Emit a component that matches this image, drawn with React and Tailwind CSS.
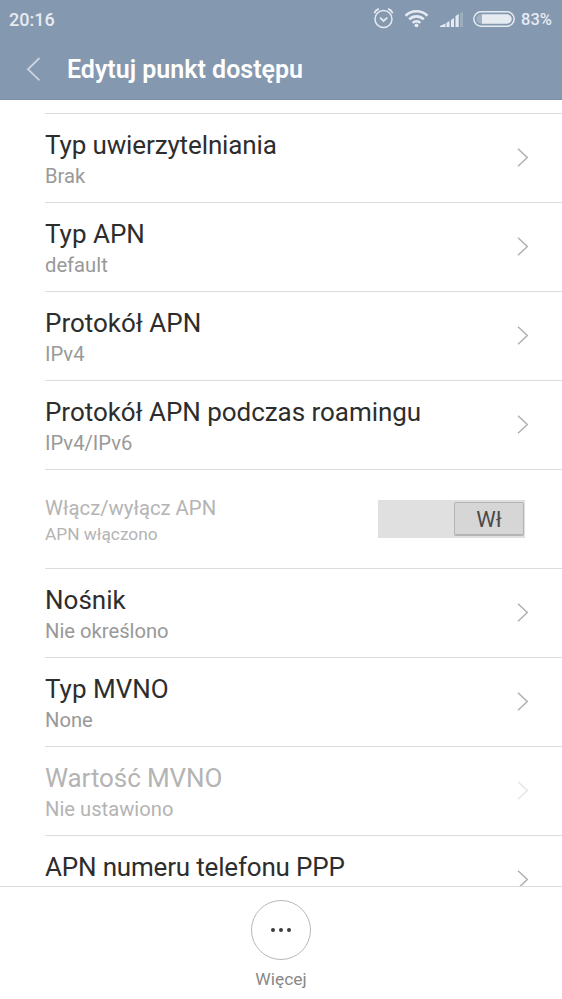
const items = [
  { title: "Typ uwierzytelniania", value: "Brak", tracking: "tracking-[-0.12px]" },
  { title: "Typ APN", value: "default" },
  { title: "Protokół APN", value: "IPv4" },
  { title: "Protokół APN podczas roamingu", value: "IPv4/IPv6", tracking: "tracking-[-0.04px]" },
  { title: "Włącz/wyłącz APN", value: "APN włączono", toggle: true },
  { title: "Nośnik", value: "Nie określono" },
  { title: "Typ MVNO", value: "None" },
  { title: "Wartość MVNO", value: "Nie ustawiono", disabled: true, tracking: "tracking-[-0.1px]" },
  { title: "APN numeru telefonu PPP", tracking: "tracking-[-0.18px]" },
];

const StatusBar = () => (
  <div className="flex h-[39px] items-center justify-between pl-[9px] pr-[10px] text-[#e6ebf1]">
    <span className="text-[18px] leading-[22px] font-medium">20:16</span>
    <div className="flex h-full items-center">
      <svg className="-mt-[3px]" width="22" height="22" viewBox="0 0 22 22" fill="none" stroke="currentColor" strokeWidth="1.5">
        <circle cx="10.5" cy="12" r="8.5" />
        <path d="M7 10.600 10.500 14l3.800-3.400" strokeWidth="1.8" />
        <path d="M1.300 6.200Q2.500 3 5.900 1.900M19.700 6.200Q18.500 3 15.100 1.900" strokeWidth="1.800" />
      </svg>
      <svg className="-mt-[3px] ml-[9px]" width="25" height="20" viewBox="0 0 26 20" fill="none" stroke="currentColor" strokeWidth="2.7">
        <path d="M1.600 7.700a16.100 16.100 0 0 1 22.800 0" />
        <path d="M5.400 11.500a10.700 10.700 0 0 1 15.200 0" />
        <path d="M9 15.100a5.700 5.700 0 0 1 8 0" />
        <circle cx="13" cy="17.600" r="2" fill="currentColor" stroke="none" />
      </svg>
      <svg className="-mt-px ml-[11px]" width="24" height="16" viewBox="0 0 24 16" fill="currentColor">
        <path d="M0 16v-1l5.500-2.500V16zM6.500 11.700l3-1.700v6h-3zM11 9l3-2v9h-3zM15.500 5l3.200-2v13h-3.200z" />
        <path d="M20 2.500l3-2V16h-3z" opacity=".25" />
      </svg>
      <svg className="-mt-px ml-[9px]" width="42" height="16" viewBox="0 0 42 16">
        <rect x=".8" y=".8" width="40.400" height="14.400" rx="7.200" fill="none" stroke="currentColor" strokeWidth="1.5" />
        <path d="M9 3.300h25a4.700 4.700 0 0 1 0 9.400H9z" fill="currentColor" />
        <path d="M9 3.300H8a4.700 4.700 0 0 0 0 9.400h1z" fill="currentColor" opacity=".3" />
      </svg>
      <span className="ml-[6px] text-[16.5px] leading-[22px] font-medium">83%</span>
    </div>
  </div>
);

const Chevron = ({ className }) => (
  <svg className={className} width="12" height="20" viewBox="0 0 12 20" fill="none" stroke="currentColor" strokeWidth="1.5">
    <path d="M1 .7 10.300 9.500 1 18.300" />
  </svg>
);

const Row = ({ title, value, disabled, tracking = "" }) => (
  <div className="ml-[45px] flex h-[89px] shrink-0 items-start justify-between border-t border-[#dcdcdc] pr-[33px]">
    <div className={disabled ? "pt-4 text-[#b4b4b4]" : "pt-4 text-[#999]"}>
      <div className={`text-[26px] leading-[30px] ${tracking} ${disabled ? "" : "text-[#2d2d2d]"}`}>{title}</div>
      {value && <div className="mt-1 text-[20.2px] leading-6">{value}</div>}
    </div>
    <Chevron className={disabled ? "mt-[34px] text-[#e6e6e6]" : "mt-[34px] text-[#b0b0b0]"} />
  </div>
);

const ToggleRow = ({ title, value }) => (
  <div className="ml-[45px] flex h-[99px] shrink-0 items-start justify-between border-t border-[#dcdcdc] pr-[37px] text-[#b4b4b4]">
    <div className="pt-[26px]">
      <div className="text-[20.3px] leading-6">{title}</div>
      <div className="mt-1 text-[17.3px] leading-5">{value}</div>
    </div>
    <div className="mt-[30px] flex h-[38px] w-[147px] justify-end bg-[#e0e0e0] px-[1px] py-[2px]">
      <div className="flex h-[34px] w-[70px] items-center justify-center rounded-[2px] border border-b-2 border-[#b4b4b4] bg-[#d6d6d6] pt-[3px] text-[22px] leading-[30px] text-[#4a4a4a]">
        Wł
      </div>
    </div>
  </div>
);

export default function App() {
  return (
    <div className="flex h-[999px] w-[562px] flex-col overflow-hidden bg-white font-['Roboto',sans-serif]">
      <header className="h-[100px] shrink-0 border-b border-[#7c90a9] bg-[#8498b0]">
        <StatusBar />
        <div className="flex h-[60px] items-center pl-[26px]">
          <svg width="15" height="24" viewBox="0 0 15 24" fill="none" stroke="#cbd4df" strokeWidth="1.8">
            <path d="M13.500 1 2 12.300l11.500 11" />
          </svg>
          <h1 className="ml-[26px] pt-[2px] text-[25px] leading-[30px] font-semibold text-white">Edytuj punkt dostępu</h1>
        </div>
      </header>

      <main className="flex flex-1 flex-col overflow-hidden pt-[13px]">
        {items.map((item) =>
          item.toggle ? <ToggleRow key={item.title} {...item} /> : <Row key={item.title} {...item} />
        )}
      </main>

      <footer className="flex h-[113px] shrink-0 flex-col items-center border-t border-[#dcdcdc] pt-[13px]">
        <button className="flex size-[60px] items-center justify-center rounded-full border border-[#b8b8b8]">
          <svg width="20" height="4" viewBox="0 0 20 4" fill="#3c3c3c">
            <circle cx="2" cy="2" r="2" />
            <circle cx="10" cy="2" r="2" />
            <circle cx="18" cy="2" r="2" />
          </svg>
        </button>
        <span className="mt-2 text-[17.4px] leading-[22px] text-[#888]">Więcej</span>
      </footer>
    </div>
  );
}
